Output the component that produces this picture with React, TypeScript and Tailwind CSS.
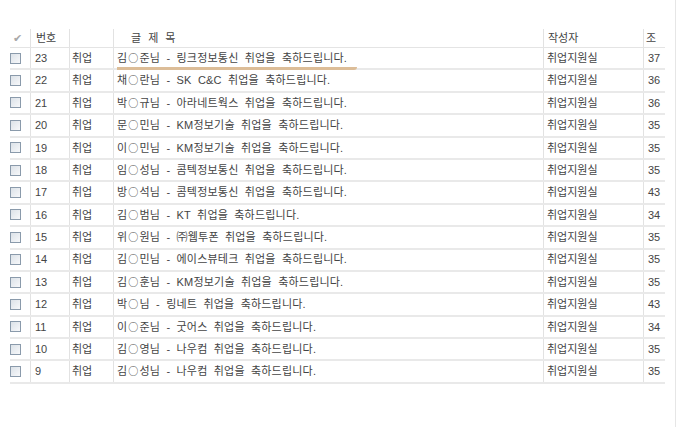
import React from 'react';

const rows: [number, string][] = [
  [23, '김○준님 - 링크정보통신 취업을 축하드립니다.'],
  [22, '채○란님 - SK C&C 취업을 축하드립니다.'],
  [21, '박○규님 - 아라네트웍스 취업을 축하드립니다.'],
  [20, '문○민님 - KM정보기술 취업을 축하드립니다.'],
  [19, '이○민님 - KM정보기술 취업을 축하드립니다.'],
  [18, '임○성님 - 콤텍정보통신 취업을 축하드립니다.'],
  [17, '방○석님 - 콤텍정보통신 취업을 축하드립니다.'],
  [16, '김○범님 - KT 취업을 축하드립니다.'],
  [15, '위○원님 - ㈜웹투폰 취업을 축하드립니다.'],
  [14, '김○민님 - 에이스뷰테크 취업을 축하드립니다.'],
  [13, '김○훈님 - KM정보기술 취업을 축하드립니다.'],
  [12, '박○님 - 링네트 취업을 축하드립니다.'],
  [11, '이○준님 - 굿어스 취업을 축하드립니다.'],
  [10, '김○영님 - 나우컴 취업을 축하드립니다.'],
  [9, '김○성님 - 나우컴 취업을 축하드립니다.'],
];

const views = [37, 36, 36, 35, 35, 35, 43, 34, 35, 35, 35, 43, 34, 35, 35];

const font = { fontFamily: '"Liberation Sans", "Noto Sans CJK KR", sans-serif' };
const cjk = { fontFamily: '"Noto Sans CJK KR", sans-serif' };

function Checkbox() {
  return (
    <span className="block w-[11px] h-[11px] border border-[#8a9aab] bg-gradient-to-br from-[#dce2e8] to-[#f7f8fa]" />
  );
}

function Title({ text }: { text: string }) {
  const [a, b] = text.split('○');
  return (
    <>
      {a}
      <span style={cjk} className="text-[10px] px-[1px]">○</span>
      {b}
    </>
  );
}

export default function App() {
  return (
    <div className="w-[680px] h-[427px] bg-white text-[11px] text-[#444] flex overflow-hidden" style={font}>
      <div className="flex-1 pt-[29px] pl-[10px] pr-[10px]">
        {/* header */}
        <div className="flex h-[19px] items-center border-b border-[#e4e4e4]">
          <div className="w-[20px] h-full flex items-center pl-[3px] text-[#a8a8a8] text-[11px]">✔</div>
          <div className="w-[39px] h-full border-l border-[#e2e2e2] pl-[5px] flex items-center">번호</div>
          <div className="w-[44px] h-full border-l border-[#e2e2e2]" />
          <div className="w-[430px] h-full border-l border-[#e2e2e2] pl-[17px] flex items-center tracking-[2px]">글 제 목</div>
          <div className="w-[100px] h-full border-l border-[#e2e2e2] pl-[4px] flex items-center">작성자</div>
          <div className="w-[22px] h-full border-l border-[#e2e2e2] pl-[2px] flex items-center overflow-hidden">조</div>
        </div>
        {rows.map(([no, title], i) => (
          <div key={no} className="flex h-[22.4px] items-stretch border-b-2 border-[#e9e9e9]">
            <div className="w-[20px] flex items-center">
              <Checkbox />
            </div>
            <div className="w-[39px] border-l border-[#e2e2e2] pl-[4px] flex items-center">{no}</div>
            <div className="w-[44px] border-l border-[#e2e2e2] pl-[2px] flex items-center">취업</div>
            <div className="w-[430px] border-l border-[#e2e2e2] pl-[3px] flex items-center [word-spacing:3px] tracking-[0.2px]">
              {i === 0 ? (
                <span className="pt-[4px] pb-[1px] pr-[10px] border-b-[3px] border-[#dcbd98] rounded-br-[3px]">
                  <Title text={title} />
                </span>
              ) : (
                <span>
                  <Title text={title} />
                </span>
              )}
            </div>
            <div className="w-[100px] border-l border-[#e2e2e2] pl-[3px] flex items-center">취업지원실</div>
            <div className="w-[22px] border-l border-[#e2e2e2] pl-[4px] flex items-center">{views[i]}</div>
          </div>
        ))}
      </div>
      <div className="w-[5px] border-l border-[#e6e6e6]" />
    </div>
  );
}
